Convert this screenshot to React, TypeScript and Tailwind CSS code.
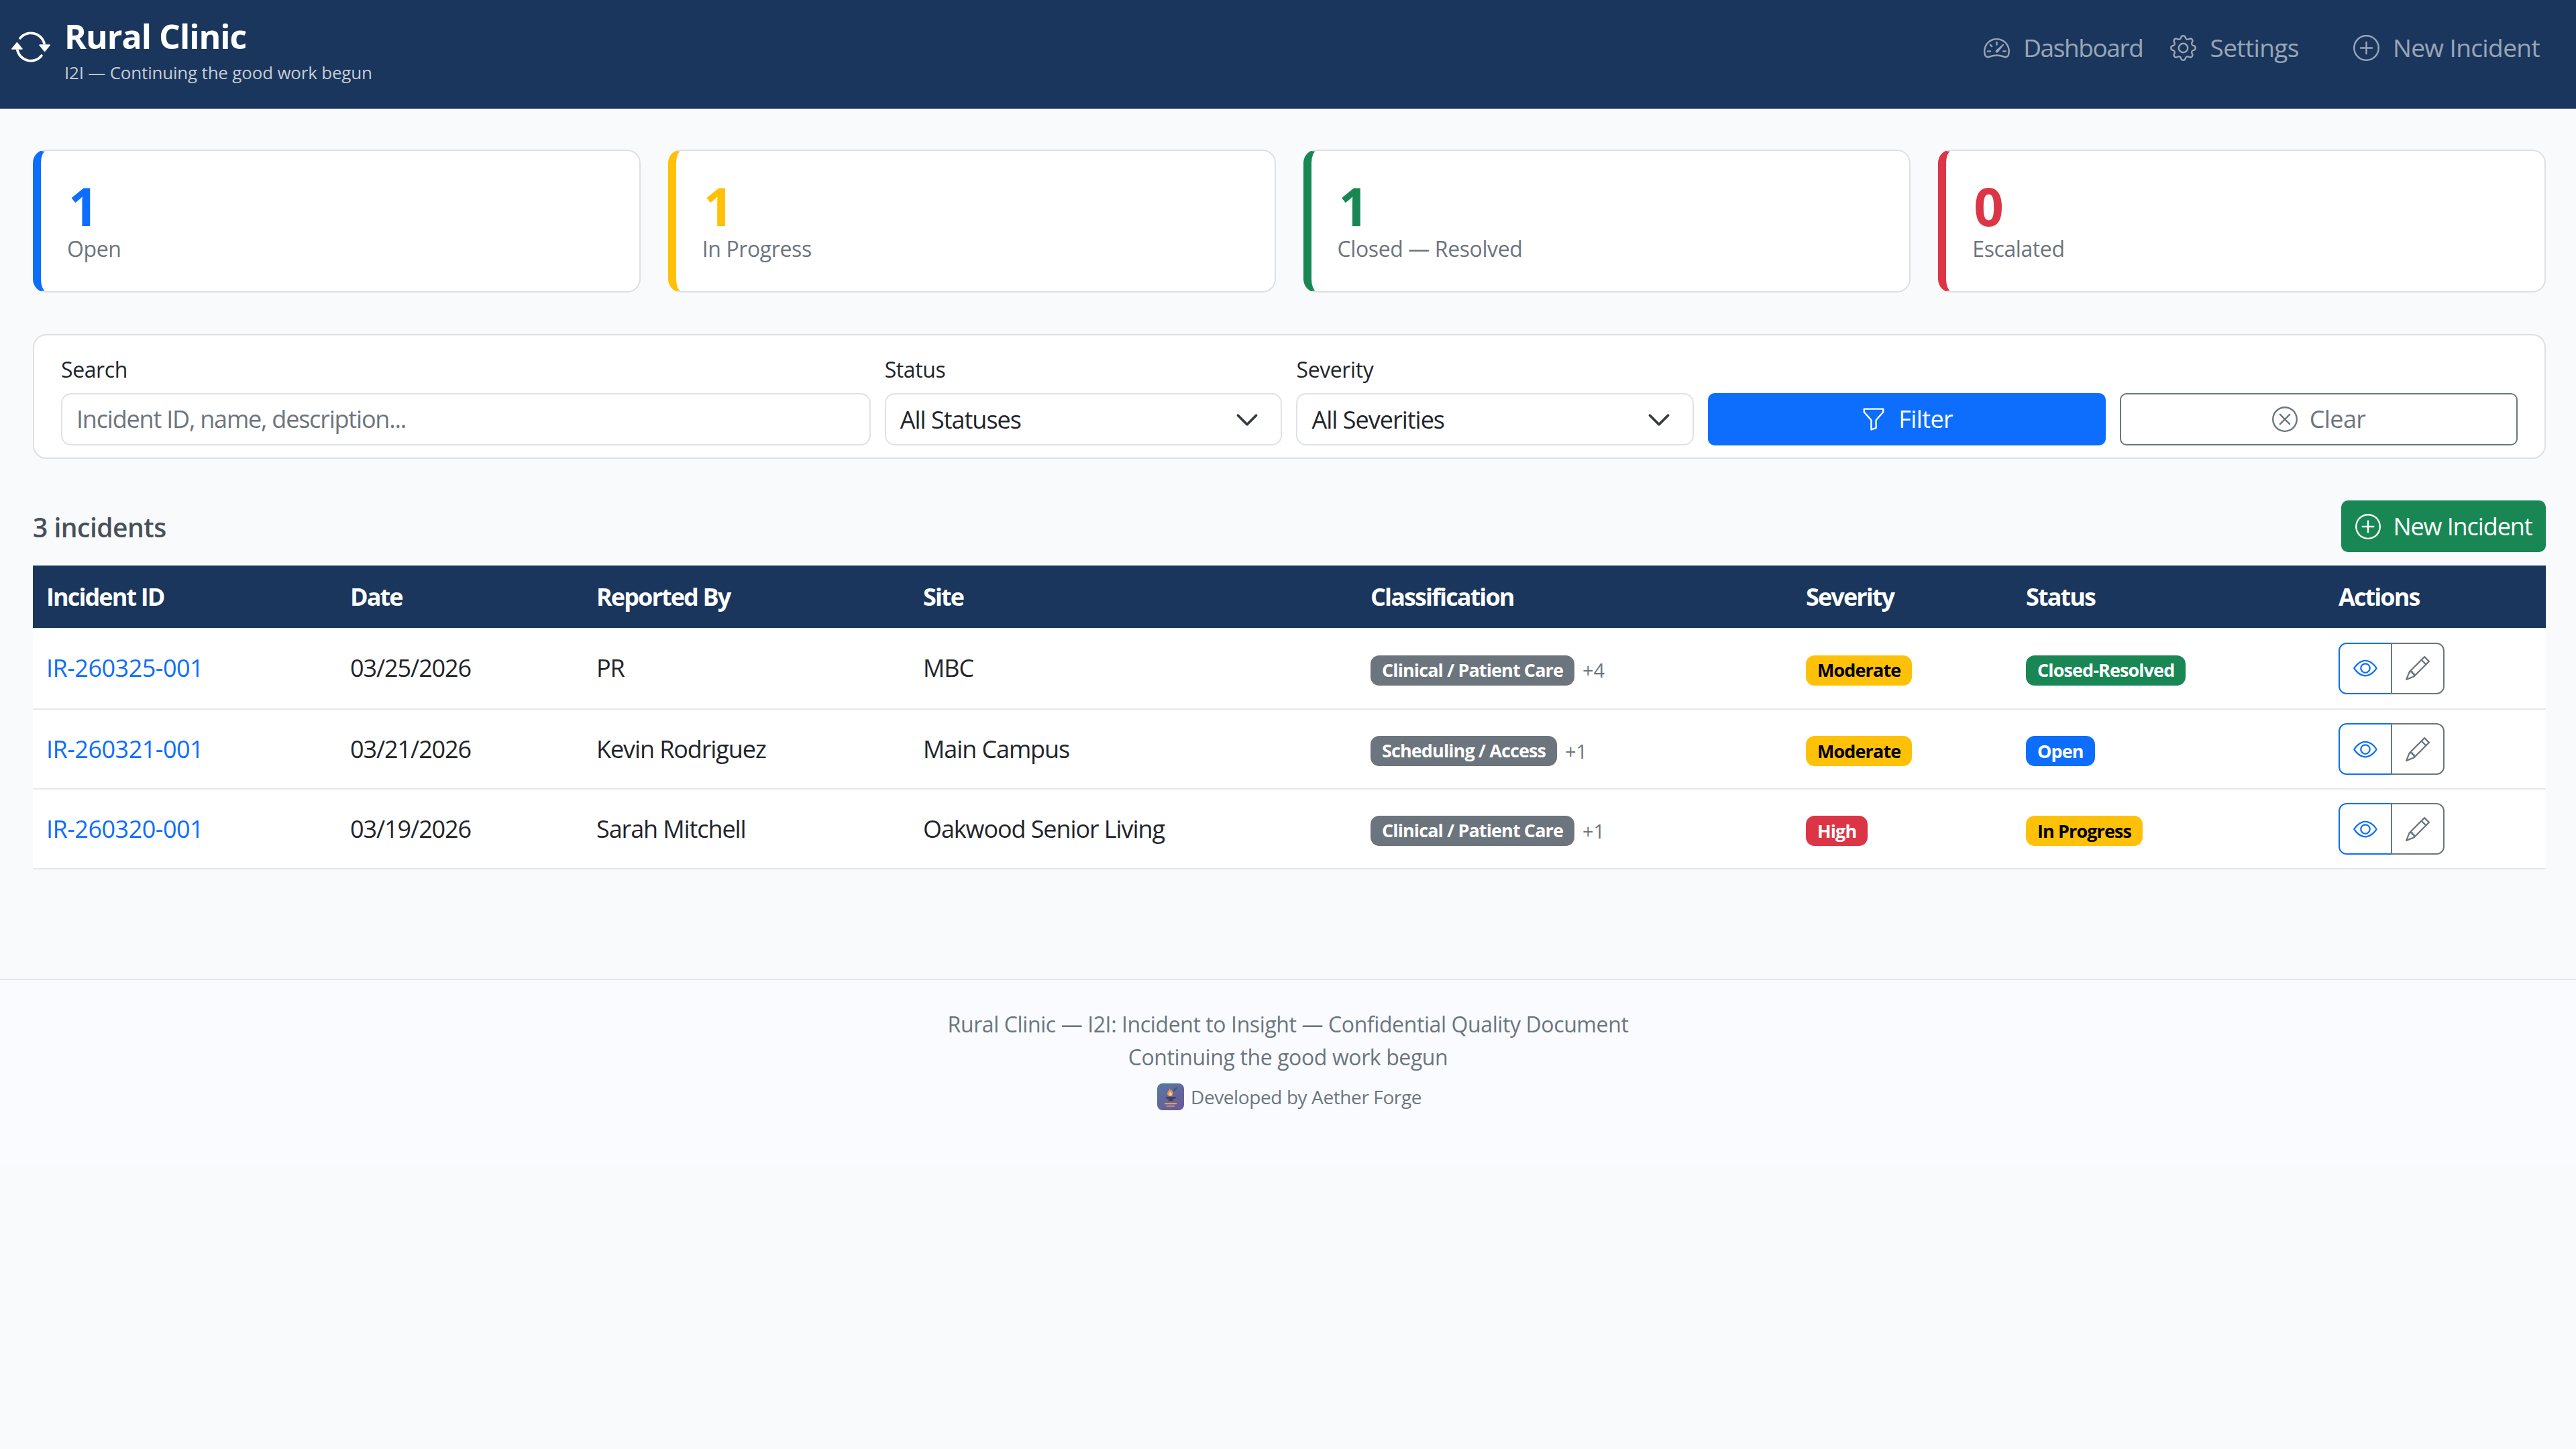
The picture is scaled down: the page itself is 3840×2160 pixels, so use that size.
import {
  BsArrowRepeat,
  BsEye,
  BsFunnel,
  BsGear,
  BsPencil,
  BsPlusCircle,
  BsSpeedometer2,
  BsXCircle,
} from "react-icons/bs";

const stats = [
  { value: "1", label: "Open", border: "border-l-[#0d6efd]", text: "text-[#0d6efd]" },
  { value: "1", label: "In Progress", border: "border-l-[#ffc107]", text: "text-[#ffc107]" },
  { value: "1", label: "Closed — Resolved", border: "border-l-[#198754]", text: "text-[#198754]" },
  { value: "0", label: "Escalated", border: "border-l-[#dc3545]", text: "text-[#dc3545]" },
];

const incidents = [
  {
    id: "IR-260325-001",
    date: "03/25/2026",
    by: "PR",
    site: "MBC",
    cls: "Clinical / Patient Care",
    more: "+4",
    severity: "Moderate",
    sevClass: "bg-[#ffc107] text-black",
    status: "Closed-Resolved",
    statusClass: "bg-[#198754] text-white",
  },
  {
    id: "IR-260321-001",
    date: "03/21/2026",
    by: "Kevin Rodriguez",
    site: "Main Campus",
    cls: "Scheduling / Access",
    more: "+1",
    severity: "Moderate",
    sevClass: "bg-[#ffc107] text-black",
    status: "Open",
    statusClass: "bg-[#0d6efd] text-white",
  },
  {
    id: "IR-260320-001",
    date: "03/19/2026",
    by: "Sarah Mitchell",
    site: "Oakwood Senior Living",
    cls: "Clinical / Patient Care",
    more: "+1",
    severity: "High",
    sevClass: "bg-[#dc3545] text-white",
    status: "In Progress",
    statusClass: "bg-[#ffc107] text-black",
  },
];

const columns = [
  { label: "Incident ID", width: "w-[453px]" },
  { label: "Date", width: "w-[367px]" },
  { label: "Reported By", width: "w-[487px]" },
  { label: "Site", width: "w-[667px]" },
  { label: "Classification", width: "w-[649px]" },
  { label: "Severity", width: "w-[328px]" },
  { label: "Status", width: "w-[466px]" },
  { label: "Actions", width: "w-[329px]" },
];

function Chevron() {
  return (
    <svg viewBox="0 0 16 16" className="h-[36px] w-[36px] shrink-0" fill="none">
      <path d="m2 5 6 6 6-6" stroke="#343a40" strokeWidth="1.700" strokeLinecap="round" strokeLinejoin="round" />
    </svg>
  );
}

function ForgeLogo() {
  return (
    <svg viewBox="0 0 40 40" className="h-[40px] w-[40px] shrink-0">
      <defs>
        <linearGradient id="forge" x1="0" y1="0" x2="0.6" y2="1">
          <stop offset="0" stopColor="#557aa6" />
          <stop offset="1" stopColor="#6a5a98" />
        </linearGradient>
      </defs>
      <rect width="40" height="40" rx="8" fill="url(#forge)" />
      <path d="M18 7c1 3-3 5-3 8 0 3 2 4 4.500 4s4-1.500 4-4c0-2.500-1.500-3.500-2.500-5.500-.8 1.500-1.500 1-3-2.500z" fill="#e8935a" />
      <path d="M19 12c0 2-1.500 2.500-1.500 4s1 2.500 2 2.500 2.500-1 2.500-2.500-1.500-2-3-4z" fill="#f3d08a" />
      <path d="M25 8l6-3-3 5-4 3z" fill="#4a5578" />
      <path d="M12 20h17l-3 3h-3l1.500 3H16l2-3h-3z" fill="#3d3f60" />
      <rect x="11" y="29" width="18" height="2.200" fill="#d9a066" />
      <rect x="14" y="33" width="12" height="1.800" fill="#cf9660" />
    </svg>
  );
}

export default function App() {
  return (
    <div className="min-h-screen bg-[#f8fafc] font-['Open_Sans',sans-serif] text-[#212529]">
      {/* Navbar */}
      <header className="flex h-[162px] items-center justify-between bg-[#1a365d] pl-[16px] pr-[54px]">
        <div className="flex items-center gap-[20px]">
          <BsArrowRepeat className="mb-[22px] h-[60px] w-[60px] text-white" />
          <div className="mb-[12px]">
            <div className="text-[50px] font-bold leading-[66px] tracking-[-1px] text-white">Rural Clinic</div>
            <div className="text-[26px] leading-[42px] tracking-[-0.2px] text-white/75">
              I2I — Continuing the good work begun
            </div>
          </div>
        </div>
        <nav className="mb-[20px] flex items-center text-[37px] tracking-[-0.6px] text-white/55">
          <a className="flex items-center gap-[20px]">
            <BsSpeedometer2 className="h-[39px] w-[39px]" />
            <span className="tracking-[-1.400px]">Dashboard</span>
          </a>
          <a className="ml-[41px] flex items-center gap-[20px]">
            <BsGear className="h-[39px] w-[39px]" />
            Settings
          </a>
          <a className="ml-[81px] flex items-center gap-[20px]">
            <BsPlusCircle className="h-[39px] w-[39px]" />
            New Incident
          </a>
        </nav>
      </header>

      <main className="pl-[49px] pr-[45px]">
        {/* Stat cards */}
        <div className="mt-[61px] grid grid-cols-4 gap-[41px]">
          {stats.map((s) => (
            <div
              key={s.label}
              className={`h-[213px] rounded-[20px] border-2 border-l-[12px] border-[#dddfe1] bg-white pl-[39px] pt-[40px] ${s.border}`}
            >
              <div className={`ml-[2px] text-[78px] font-bold leading-[84px] ${s.text}`}>{s.value}</div>
              <div className="text-[32px] leading-[44px] tracking-[-0.4px] text-[#6c757d]">{s.label}</div>
            </div>
          ))}
        </div>

        {/* Filters */}
        <div className="mt-[62px] flex h-[186px] items-end rounded-[20px] border-2 border-[#dddfe1] bg-white px-[40px] pb-[18px]">
          <div className="grid w-full grid-cols-6 gap-[21px]">
            <label className="col-span-2 block">
              <div className="mb-[12px] text-[32px] leading-[46px] tracking-[-0.4px]">Search</div>
              <div className="flex h-[78px] items-center rounded-[15px] border-2 border-[#dee2e6] px-[21px] text-[36px] tracking-[-1.2px] text-[#6c757d]">
                Incident ID, name, description...
              </div>
            </label>
            <label className="block">
              <div className="mb-[12px] text-[32px] leading-[46px] tracking-[-0.4px]">Status</div>
              <div className="flex h-[78px] items-center justify-between rounded-[15px] border-2 border-[#dee2e6] pl-[21px] pr-[32px] pt-[2px] text-[36px] tracking-[-1px]">
                All Statuses
                <Chevron />
              </div>
            </label>
            <label className="block">
              <div className="mb-[12px] text-[32px] leading-[46px] tracking-[-0.4px]">Severity</div>
              <div className="flex h-[78px] items-center justify-between rounded-[15px] border-2 border-[#dee2e6] pl-[21px] pr-[32px] pt-[2px] text-[36px] tracking-[-1px]">
                All Severities
                <Chevron />
              </div>
            </label>
            <button className="flex h-[78px] items-center justify-center gap-[18px] self-end rounded-[10px] bg-[#0d6efd] text-[36px] tracking-[-0.6px] text-white">
              <BsFunnel className="h-[38px] w-[38px]" />
              Filter
            </button>
            <button className="flex h-[78px] items-center justify-center gap-[18px] self-end rounded-[10px] border-2 border-[#6c757d] bg-white text-[36px] tracking-[-0.6px] text-[#6c757d]">
              <BsXCircle className="h-[38px] w-[38px]" />
              Clear
            </button>
          </div>
        </div>

        {/* List heading */}
        <div className="mb-[20px] mt-[62px] flex items-center justify-between">
          <h2 className="pt-[3px] text-[39px] font-semibold tracking-[-0.5px] text-[#495057]">3 incidents</h2>
          <button className="flex h-[77px] w-[305px] items-center justify-center gap-[19px] rounded-[10px] bg-[#198754] text-[36px] tracking-[-1.1px] text-white">
            <BsPlusCircle className="h-[38px] w-[38px]" />
            New Incident
          </button>
        </div>

        {/* Table */}
        <table className="w-full table-fixed bg-white text-[36px] tracking-[-1.1px]">
          <thead>
            <tr className="h-[93px] bg-[#1a365d] text-white">
              {columns.map((c) => (
                <th key={c.label} className={`${c.width} px-[20px] text-left text-[36px] font-bold tracking-[-1.9px]`}>
                  {c.label}
                </th>
              ))}
            </tr>
          </thead>
          <tbody>
            {incidents.map((r) => (
              <tr key={r.id} className="h-[119px] border-b-2 border-[#e5e8eb] first:h-[121px]">
                <td className="px-[20px] font-medium tracking-[-0.5px] text-[#0d6efd]">{r.id}</td>
                <td className="px-[20px]">{r.date}</td>
                <td className="px-[20px]">{r.by}</td>
                <td className="px-[20px]">{r.site}</td>
                <td className="px-[20px]">
                  <div className="mt-[6px] flex items-center gap-[12px]">
                    <span className="flex h-[45px] items-center rounded-[13px] bg-[#6c757d] px-[17px] text-[27px] font-bold tracking-[-0.9px] text-white">
                      {r.cls}
                    </span>
                    <span className="text-[29px] tracking-normal text-[#6c757d]">{r.more}</span>
                  </div>
                </td>
                <td className="px-[20px]">
                  <span className={`mt-[6px] inline-flex h-[45px] items-center rounded-[13px] px-[17px] text-[27px] font-bold tracking-[-0.9px] ${r.sevClass}`}>
                    {r.severity}
                  </span>
                </td>
                <td className="px-[20px]">
                  <span className={`mt-[6px] inline-flex h-[45px] items-center rounded-[13px] px-[17px] text-[27px] font-bold tracking-[-0.9px] ${r.statusClass}`}>
                    {r.status}
                  </span>
                </td>
                <td className="px-[20px]">
                  <div className="flex h-[77px] w-[158px]">
                    <button className="flex w-[80px] items-center justify-center rounded-l-[12px] border-2 border-[#0d6efd] text-[#0d6efd]">
                      <BsEye className="h-[36px] w-[36px]" />
                    </button>
                    <button className="-ml-[2px] flex w-[80px] items-center justify-center rounded-r-[12px] border-2 border-[#6c757d] text-[#6c757d]">
                      <BsPencil className="h-[36px] w-[36px]" />
                    </button>
                  </div>
                </td>
              </tr>
            ))}
          </tbody>
        </table>
      </main>

      {/* Footer */}
      <footer className="mt-[163px] flex h-[278px] flex-col items-center border-t-2 border-[#e2e6ea] bg-[#f9fbfe] pt-[41px] text-[32px] leading-[49px] tracking-[-0.4px] text-[#6c757d]">
        <div>Rural Clinic — I2I: Incident to Insight — Confidential Quality Document</div>
        <div>Continuing the good work begun</div>
        <div className="mt-[15px] flex items-center gap-[10px] pl-[4px] text-[28px] leading-[40px] tracking-[-0.4px]">
          <ForgeLogo />
          Developed by Aether Forge
        </div>
      </footer>
    </div>
  );
}
